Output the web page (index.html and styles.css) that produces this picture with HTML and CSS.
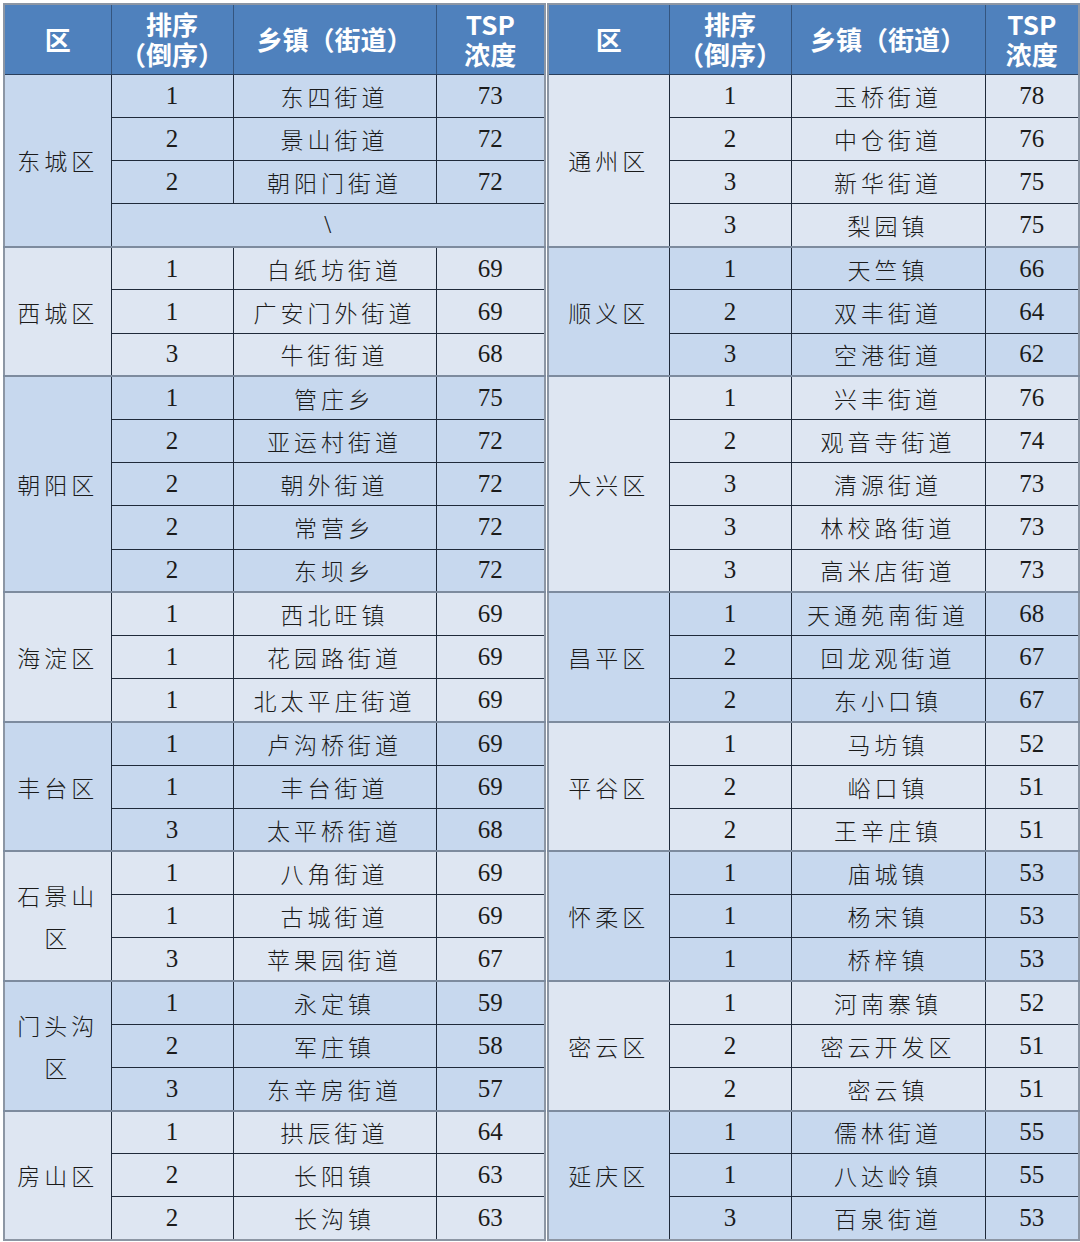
FILE: index.html
```html
<!DOCTYPE html>
<html lang="zh-CN">
<head>
<meta charset="utf-8">
<title>TSP 浓度排名</title>
<link rel="stylesheet" href="styles.css">
</head>
<body>
<div class="page">
  <table class="tbl t-left">
    <colgroup><col class="c1"><col class="c2"><col class="c3"><col class="c4"></colgroup>
    <thead>
      <tr><th>区</th><th>排序<br>（倒序）</th><th>乡镇（街道）</th><th>TSP<br>浓度</th></tr>
    </thead>
    <tbody class="dark">
      <tr><td rowspan="4" class="dist">东城区</td><td class="num">1</td><td class="name">东四街道</td><td class="num">73</td></tr>
      <tr><td class="num">2</td><td class="name">景山街道</td><td class="num">72</td></tr>
      <tr><td class="num">2</td><td class="name">朝阳门街道</td><td class="num">72</td></tr>
      <tr><td class="num" colspan="3">\</td></tr>
    </tbody>
    <tbody class="light">
      <tr><td rowspan="3" class="dist">西城区</td><td class="num">1</td><td class="name">白纸坊街道</td><td class="num">69</td></tr>
      <tr><td class="num">1</td><td class="name">广安门外街道</td><td class="num">69</td></tr>
      <tr><td class="num">3</td><td class="name">牛街街道</td><td class="num">68</td></tr>
    </tbody>
    <tbody class="dark">
      <tr><td rowspan="5" class="dist">朝阳区</td><td class="num">1</td><td class="name">管庄乡</td><td class="num">75</td></tr>
      <tr><td class="num">2</td><td class="name">亚运村街道</td><td class="num">72</td></tr>
      <tr><td class="num">2</td><td class="name">朝外街道</td><td class="num">72</td></tr>
      <tr><td class="num">2</td><td class="name">常营乡</td><td class="num">72</td></tr>
      <tr><td class="num">2</td><td class="name">东坝乡</td><td class="num">72</td></tr>
    </tbody>
    <tbody class="light">
      <tr><td rowspan="3" class="dist">海淀区</td><td class="num">1</td><td class="name">西北旺镇</td><td class="num">69</td></tr>
      <tr><td class="num">1</td><td class="name">花园路街道</td><td class="num">69</td></tr>
      <tr><td class="num">1</td><td class="name">北太平庄街道</td><td class="num">69</td></tr>
    </tbody>
    <tbody class="dark">
      <tr><td rowspan="3" class="dist">丰台区</td><td class="num">1</td><td class="name">卢沟桥街道</td><td class="num">69</td></tr>
      <tr><td class="num">1</td><td class="name">丰台街道</td><td class="num">69</td></tr>
      <tr><td class="num">3</td><td class="name">太平桥街道</td><td class="num">68</td></tr>
    </tbody>
    <tbody class="light">
      <tr><td rowspan="3" class="dist">石景山<br>区</td><td class="num">1</td><td class="name">八角街道</td><td class="num">69</td></tr>
      <tr><td class="num">1</td><td class="name">古城街道</td><td class="num">69</td></tr>
      <tr><td class="num">3</td><td class="name">苹果园街道</td><td class="num">67</td></tr>
    </tbody>
    <tbody class="dark">
      <tr><td rowspan="3" class="dist">门头沟<br>区</td><td class="num">1</td><td class="name">永定镇</td><td class="num">59</td></tr>
      <tr><td class="num">2</td><td class="name">军庄镇</td><td class="num">58</td></tr>
      <tr><td class="num">3</td><td class="name">东辛房街道</td><td class="num">57</td></tr>
    </tbody>
    <tbody class="light">
      <tr><td rowspan="3" class="dist">房山区</td><td class="num">1</td><td class="name">拱辰街道</td><td class="num">64</td></tr>
      <tr><td class="num">2</td><td class="name">长阳镇</td><td class="num">63</td></tr>
      <tr><td class="num">2</td><td class="name">长沟镇</td><td class="num">63</td></tr>
    </tbody>
  </table>

  <table class="tbl t-right">
    <colgroup><col class="r1"><col class="r2"><col class="r3"><col class="r4"></colgroup>
    <thead>
      <tr><th>区</th><th>排序<br>（倒序）</th><th>乡镇（街道）</th><th>TSP<br>浓度</th></tr>
    </thead>
    <tbody class="light">
      <tr><td rowspan="4" class="dist">通州区</td><td class="num">1</td><td class="name">玉桥街道</td><td class="num">78</td></tr>
      <tr><td class="num">2</td><td class="name">中仓街道</td><td class="num">76</td></tr>
      <tr><td class="num">3</td><td class="name">新华街道</td><td class="num">75</td></tr>
      <tr><td class="num">3</td><td class="name">梨园镇</td><td class="num">75</td></tr>
    </tbody>
    <tbody class="dark">
      <tr><td rowspan="3" class="dist">顺义区</td><td class="num">1</td><td class="name">天竺镇</td><td class="num">66</td></tr>
      <tr><td class="num">2</td><td class="name">双丰街道</td><td class="num">64</td></tr>
      <tr><td class="num">3</td><td class="name">空港街道</td><td class="num">62</td></tr>
    </tbody>
    <tbody class="light">
      <tr><td rowspan="5" class="dist">大兴区</td><td class="num">1</td><td class="name">兴丰街道</td><td class="num">76</td></tr>
      <tr><td class="num">2</td><td class="name">观音寺街道</td><td class="num">74</td></tr>
      <tr><td class="num">3</td><td class="name">清源街道</td><td class="num">73</td></tr>
      <tr><td class="num">3</td><td class="name">林校路街道</td><td class="num">73</td></tr>
      <tr><td class="num">3</td><td class="name">高米店街道</td><td class="num">73</td></tr>
    </tbody>
    <tbody class="dark">
      <tr><td rowspan="3" class="dist">昌平区</td><td class="num">1</td><td class="name">天通苑南街道</td><td class="num">68</td></tr>
      <tr><td class="num">2</td><td class="name">回龙观街道</td><td class="num">67</td></tr>
      <tr><td class="num">2</td><td class="name">东小口镇</td><td class="num">67</td></tr>
    </tbody>
    <tbody class="light">
      <tr><td rowspan="3" class="dist">平谷区</td><td class="num">1</td><td class="name">马坊镇</td><td class="num">52</td></tr>
      <tr><td class="num">2</td><td class="name">峪口镇</td><td class="num">51</td></tr>
      <tr><td class="num">2</td><td class="name">王辛庄镇</td><td class="num">51</td></tr>
    </tbody>
    <tbody class="dark">
      <tr><td rowspan="3" class="dist">怀柔区</td><td class="num">1</td><td class="name">庙城镇</td><td class="num">53</td></tr>
      <tr><td class="num">1</td><td class="name">杨宋镇</td><td class="num">53</td></tr>
      <tr><td class="num">1</td><td class="name">桥梓镇</td><td class="num">53</td></tr>
    </tbody>
    <tbody class="light">
      <tr><td rowspan="3" class="dist">密云区</td><td class="num">1</td><td class="name">河南寨镇</td><td class="num">52</td></tr>
      <tr><td class="num">2</td><td class="name">密云开发区</td><td class="num">51</td></tr>
      <tr><td class="num">2</td><td class="name">密云镇</td><td class="num">51</td></tr>
    </tbody>
    <tbody class="dark">
      <tr><td rowspan="3" class="dist">延庆区</td><td class="num">1</td><td class="name">儒林街道</td><td class="num">55</td></tr>
      <tr><td class="num">1</td><td class="name">八达岭镇</td><td class="num">55</td></tr>
      <tr><td class="num">3</td><td class="name">百泉街道</td><td class="num">53</td></tr>
    </tbody>
  </table>
</div>
</body>
</html>
```

FILE: styles.css
```css
html, body {
  margin: 0;
  padding: 0;
  background: #ffffff;
}

.page {
  display: flex;
  align-items: flex-start;
  gap: 1px;
  padding: 3px 3px 0 3px;
}

.tbl {
  border-collapse: collapse;
  table-layout: fixed;
  border: 2px solid #8c96a4;
}

.t-left { width: 541px; }
.t-right { width: 531px; }

.c1 { width: 107px; }
.c2 { width: 122px; }
.c3 { width: 203px; }
.c4 { width: 109px; }

.r1 { width: 121px; }
.r2 { width: 122px; }
.r3 { width: 194px; }
.r4 { width: 94px; }

.tbl th {
  box-sizing: border-box;
  height: 70px;
  padding: 0;
  background: #4f81bd;
  color: #ffffff;
  font-family: "Noto Sans CJK SC", "Noto Sans", sans-serif;
  font-weight: 700;
  font-size: 26px;
  line-height: 30px;
  text-align: center;
  vertical-align: middle;
  border: 1px solid #34557f;
  border-bottom: 1px solid #2a3f5c;
}

.tbl td {
  box-sizing: border-box;
  height: 43.2px;
  padding: 0;
  text-align: center;
  vertical-align: middle;
  color: #1b1b1b;
  border: 1px solid #1f2a3a;
}

.dark td { background: #c7d8ee; }
.light td { background: #dee6f2; }

.tbl tbody + tbody tr:first-child td {
  border-top: 2px solid #7d8b9e;
}

.num {
  font-family: "Liberation Serif", "Times New Roman", serif;
  font-size: 25px;
  padding-top: 4px;
}

.name,
.dist {
  font-family: "Noto Sans CJK SC", "Noto Sans", sans-serif;
  font-weight: 300;
  font-size: 23px;
  letter-spacing: 4px;
  padding-left: 4px;
}

.dist {
  line-height: 42px;
}
```
